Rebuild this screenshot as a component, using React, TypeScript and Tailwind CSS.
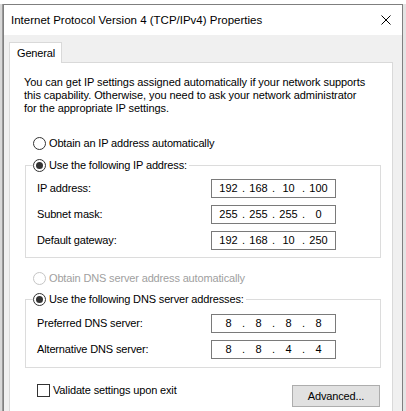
import React from 'react'

const Radio = ({ checked, disabled }: { checked?: boolean; disabled?: boolean }) => (
  <span
    className={
      disabled
        ? 'relative inline-block h-[13px] w-[13px] shrink-0 rounded-full border border-[#c5c5c5] bg-white'
        : 'relative inline-block h-[13px] w-[13px] shrink-0 rounded-full border border-[#333333] bg-white'
    }
  >
    {checked && <span className="absolute left-[2px] top-[2px] h-[7px] w-[7px] rounded-full bg-[#333333]" />}
  </span>
)

const IpBox = ({ parts }: { parts: string[] }) => (
  <div className="flex h-[19px] w-[125px] items-center border border-[#7a7a7a] bg-white pl-[3px] tracking-normal">
    {parts.map((part, i) => (
      <React.Fragment key={i}>
        {i > 0 && <span className="w-[3px] text-center">.</span>}
        <span className="w-[27px] text-center">{part}</span>
      </React.Fragment>
    ))}
  </div>
)

const Row = ({ label, parts }: { label: string; parts: string[] }) => (
  <div className="flex items-center pl-[11px]">
    <span className="w-[174px]">{label}</span>
    <IpBox parts={parts} />
  </div>
)

const Group = ({ title, children }: { title: string; children: React.ReactNode }) => (
  <fieldset className="border border-[#dcdcdc]">
    <legend className="ml-[7px] pr-[2px]">
      <span className="flex h-[16px] items-center gap-[3px]">
        <Radio checked />
        <span>{title}</span>
      </span>
    </legend>
    {children}
  </fieldset>
)

export default function App() {
  return (
    <div className="relative h-[411px] w-[406px] overflow-hidden bg-[#e4e4e4] font-['Liberation_Sans',Arial,sans-serif] text-[11px] leading-[13px] tracking-[-0.15px] text-black">
      {/* parent window behind */}
      <div className="absolute left-0 top-0 h-[4px] w-[406px] bg-white" />
      <div className="absolute left-0 top-[4px] h-[407px] w-[3px] border-r border-[#9a9a9a] bg-[#d8d8d8]" />

      {/* dialog */}
      <div className="absolute left-[3px] top-[4px] flex h-[430px] w-[400px] flex-col border border-[#7f7f7f] bg-[#f0f0f0]">
        <div className="flex h-[30px] items-center justify-between bg-white pl-[7px] pr-[11px]">
          <span className="text-[11.5px] tracking-normal">Internet Protocol Version 4 (TCP/IPv4) Properties</span>
          <svg width="10" height="10" viewBox="0 0 10 10">
            <path d="M0.5 0.5 L9.5 9.5 M9.5 0.5 L0.5 9.5" stroke="#000" strokeWidth="1" />
          </svg>
        </div>

        <div className="ml-[5px] mt-[7px] flex">
          <div className="relative z-10 -mb-[1px] flex h-[21px] w-[53px] items-center border border-b-0 border-[#d9d9d9] bg-white pl-[7px]">
            General
          </div>
        </div>

        <div className="ml-[5px] w-[384px] flex-1 border border-[#d9d9d9] bg-white">
          <p className="pl-[14px] pt-[13px] tracking-[-0.07px]">
            You can get IP settings assigned automatically if your network supports
            <br />
            this capability. Otherwise, you need to ask your network administrator
            <br />
            for the appropriate IP settings.
          </p>

          <div className="flex flex-col pl-[15px] pr-[11px]">
            <div className="ml-[8px] mt-[20px] flex h-[16px] items-center gap-[3px]">
              <Radio />
              <span>Obtain an IP address automatically</span>
            </div>

            <div className="mt-[6px]">
              <Group title="Use the following IP address:">
                <div className="flex flex-col gap-[7px] pb-[7px] pt-[6px]">
                  <Row label="IP address:" parts={['192', '168', '10', '100']} />
                  <Row label="Subnet mask:" parts={['255', '255', '255', '0']} />
                  <Row label="Default gateway:" parts={['192', '168', '10', '250']} />
                </div>
              </Group>
            </div>

            <div className="ml-[8px] mt-[12px] flex h-[16px] items-center gap-[3px] text-[#a0a0a0]">
              <Radio disabled />
              <span>Obtain DNS server address automatically</span>
            </div>

            <div className="mt-[5px]">
              <Group title="Use the following DNS server addresses:">
                <div className="flex flex-col gap-[7px] pb-[8px] pt-[7px]">
                  <Row label="Preferred DNS server:" parts={['8', '8', '8', '8']} />
                  <Row label="Alternative DNS server:" parts={['8', '8', '4', '4']} />
                </div>
              </Group>
            </div>

            <div className="mt-[16px] flex items-start justify-between">
              <div className="ml-[12px] flex items-center gap-[3px]">
                <span className="h-[13px] w-[13px] border border-[#333333] bg-white" />
                <span>Validate settings upon exit</span>
              </div>
              <button className="mr-[1px] mt-[1px] flex h-[22px] w-[88px] items-center justify-center border border-[#adadad] bg-[#e1e1e1]">
                Advanced...
              </button>
            </div>
          </div>
        </div>
      </div>
    </div>
  )
}
